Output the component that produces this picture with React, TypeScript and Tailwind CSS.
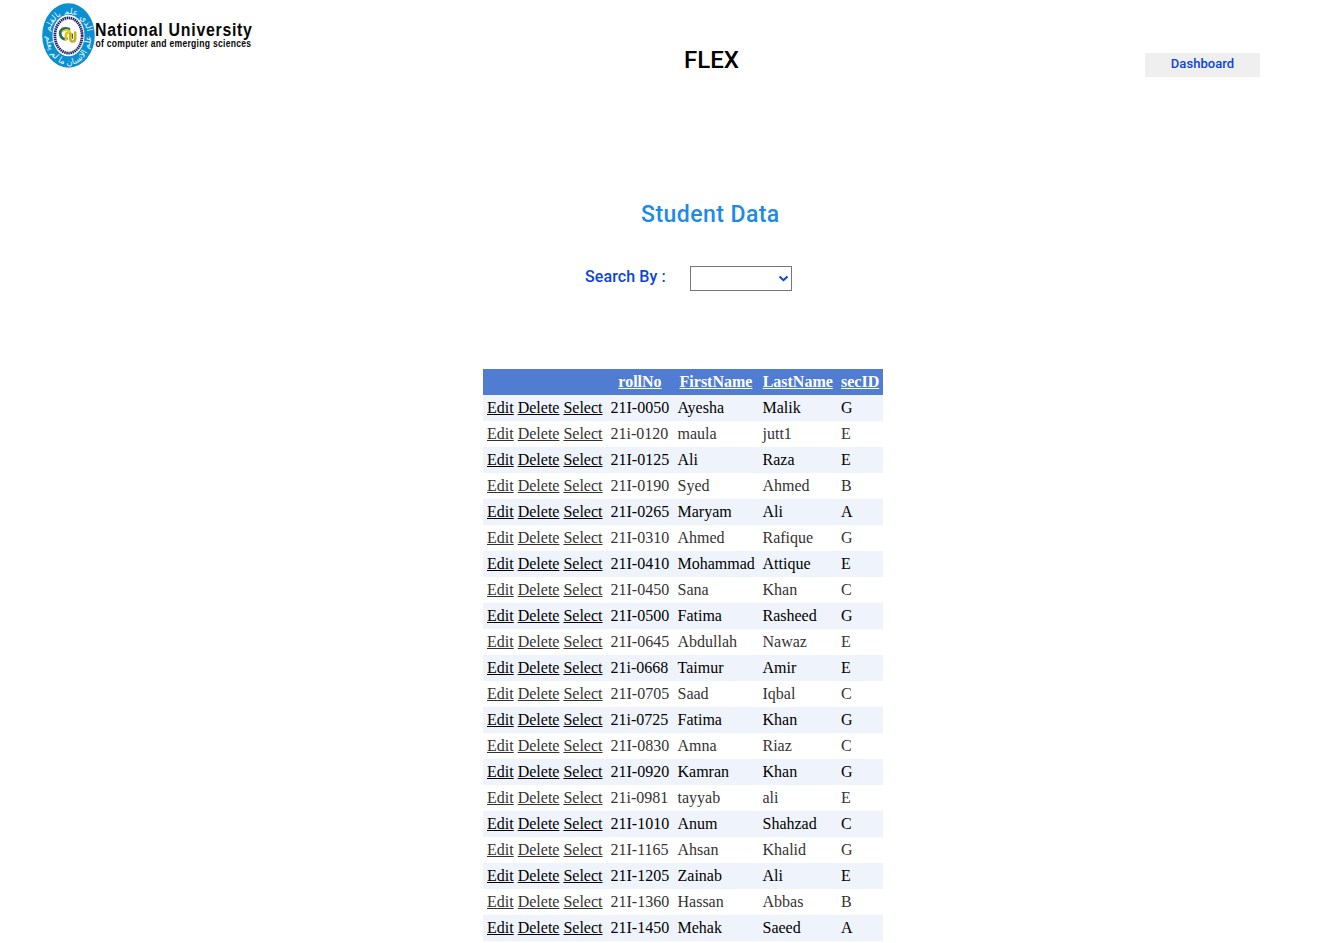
const students: [string, string, string, string][] = [
  ["21I-0050", "Ayesha", "Malik", "G"],
  ["21i-0120", "maula", "jutt1", "E"],
  ["21I-0125", "Ali", "Raza", "E"],
  ["21I-0190", "Syed", "Ahmed", "B"],
  ["21I-0265", "Maryam", "Ali", "A"],
  ["21I-0310", "Ahmed", "Rafique", "G"],
  ["21I-0410", "Mohammad", "Attique", "E"],
  ["21I-0450", "Sana", "Khan", "C"],
  ["21I-0500", "Fatima", "Rasheed", "G"],
  ["21I-0645", "Abdullah", "Nawaz", "E"],
  ["21i-0668", "Taimur", "Amir", "E"],
  ["21I-0705", "Saad", "Iqbal", "C"],
  ["21i-0725", "Fatima", "Khan", "G"],
  ["21I-0830", "Amna", "Riaz", "C"],
  ["21I-0920", "Kamran", "Khan", "G"],
  ["21i-0981", "tayyab", "ali", "E"],
  ["21I-1010", "Anum", "Shahzad", "C"],
  ["21I-1165", "Ahsan", "Khalid", "G"],
  ["21I-1205", "Zainab", "Ali", "E"],
  ["21I-1360", "Hassan", "Abbas", "B"],
  ["21I-1450", "Mehak", "Saeed", "A"],
];

function Logo() {
  return (
    <svg width="220" height="68" viewBox="42 2 220 68" className="block shrink-0 overflow-visible">
      <defs>
        <path id="ringTop" d="M49 38 A19.5 24 0 0 1 88 38" />
        <path id="ringBottom" d="M46 36 A22.5 29 0 0 0 91 36" />
      </defs>
      <ellipse cx="68.5" cy="35.5" rx="26.3" ry="32.2" fill="#0b8fd0" />
      <ellipse cx="68.5" cy="35.5" rx="16" ry="20.8" fill="#fff" />
      <g fill="#e9f8ff" fontFamily='"DejaVu Sans", sans-serif' fontSize="8.5" textAnchor="middle">
        <text><textPath href="#ringTop" startOffset="50%">الذي علم بالقلم</textPath></text>
        <text><textPath href="#ringBottom" startOffset="50%">علم الانسان ما لم يعلم</textPath></text>
      </g>
      <ellipse cx="68.5" cy="35.5" rx="13.6" ry="17.6" fill="none" stroke="#20206a" strokeWidth="2.8" strokeDasharray="1.5 0.6" />
      <g fill="none" strokeLinecap="round">
        <path d="M69 29 C63 27 59.5 30 60.3 34.5 C61 38 64 40 66.5 38.5" stroke="#28705a" strokeWidth="2.8" />
        <path d="M62.5 31.5 Q66 28.5 70 31" stroke="#dcc91c" strokeWidth="1.6" />
        <path d="M66 39.5 L66 34.5 Q66.5 32 69 32.5 Q71 33 71 36" stroke="#e3c51c" strokeWidth="2.7" />
        <path d="M70.3 34 V38.5 Q70.5 42 73.2 41.5 Q75.5 41 75.2 37.5 V32.5" stroke="#c9b21b" strokeWidth="2.6" />
        <path d="M72.5 34 V38.5" stroke="#28705a" strokeWidth="1" />
      </g>
      <g fill="#080808" fontFamily='"Liberation Sans", Arial, sans-serif' fontWeight="700">
        <text transform="translate(95 36) scale(0.86 1)" fontSize="18.5" textLength="182.5" lengthAdjust="spacing">National University</text>
        <text transform="translate(95.5 47) scale(0.86 1)" fontSize="10" textLength="181" lengthAdjust="spacing">of computer and emerging sciences</text>
      </g>
    </svg>
  );
}

export default function App() {
  return (
    <div className="h-[943px] w-full overflow-hidden bg-white font-['Roboto',sans-serif]">
      <header className="flex h-[190px] items-start pl-[42px] pt-[2px]">
        <Logo />
        <h1 className="ml-[422px] mt-[42px] w-[56px] whitespace-nowrap text-[24px] font-medium leading-8 text-black">FLEX</h1>
        <button className="ml-[405px] mt-[51px] h-6 w-[115px] bg-[#efefef] pb-[2px] text-[13px] font-medium leading-[22px] tracking-[0.05px] text-[#0a44dc]">
          Dashboard
        </button>
      </header>
      <main>
        <h2 className="ml-[641px] mt-[9px] text-[23px] font-medium leading-8 tracking-[0.45px] text-[#1c8aea]">Student Data</h2>
        <div className="ml-[585px] mt-[35px] flex h-[25px] items-start">
          <label className="w-[105px] text-[16px] font-medium leading-[22px] tracking-[0.1px] text-[#0a44dc]">Search By :</label>
          <div className="flex h-[25px] w-[102px] items-center justify-end border border-[#767676] bg-white pr-[2px]">
            <svg width="11" height="8" viewBox="0 0 11 8" fill="none">
              <path d="M1.5 1.5 L5.5 5.2 L9.5 1.5" stroke="#0a44dc" strokeWidth="2" />
            </svg>
          </div>
        </div>
        <table className="ml-[483px] mt-[78px] w-[400px] table-fixed border-collapse font-['Liberation_Serif',serif] text-[16px] leading-[18px]">
          <colgroup>
            <col className="w-[123.5px]" />
            <col className="w-[67px]" />
            <col className="w-[85px]" />
            <col className="w-[78.5px]" />
            <col className="w-[46px]" />
          </colgroup>
          <thead>
            <tr className="h-[26px] bg-[#507cd1] text-white">
              <th className="p-1" />
              {["rollNo", "FirstName", "LastName", "secID"].map((name) => (
                <th key={name} className="whitespace-nowrap p-1 text-center font-bold underline">{name}</th>
              ))}
            </tr>
          </thead>
          <tbody>
            {students.map((row) => (
              <tr key={row[0]} className="h-[26px] text-[#333333] odd:bg-[#eff3fb] odd:text-black">
                <td className="whitespace-nowrap p-1">
                  <a className="underline">Edit</a>&nbsp;<a className="underline">Delete</a>&nbsp;<a className="underline">Select</a>
                </td>
                {row.map((cell, i) => (
                  <td key={i} className="whitespace-nowrap p-1">{cell}</td>
                ))}
              </tr>
            ))}
          </tbody>
        </table>
      </main>
    </div>
  );
}
